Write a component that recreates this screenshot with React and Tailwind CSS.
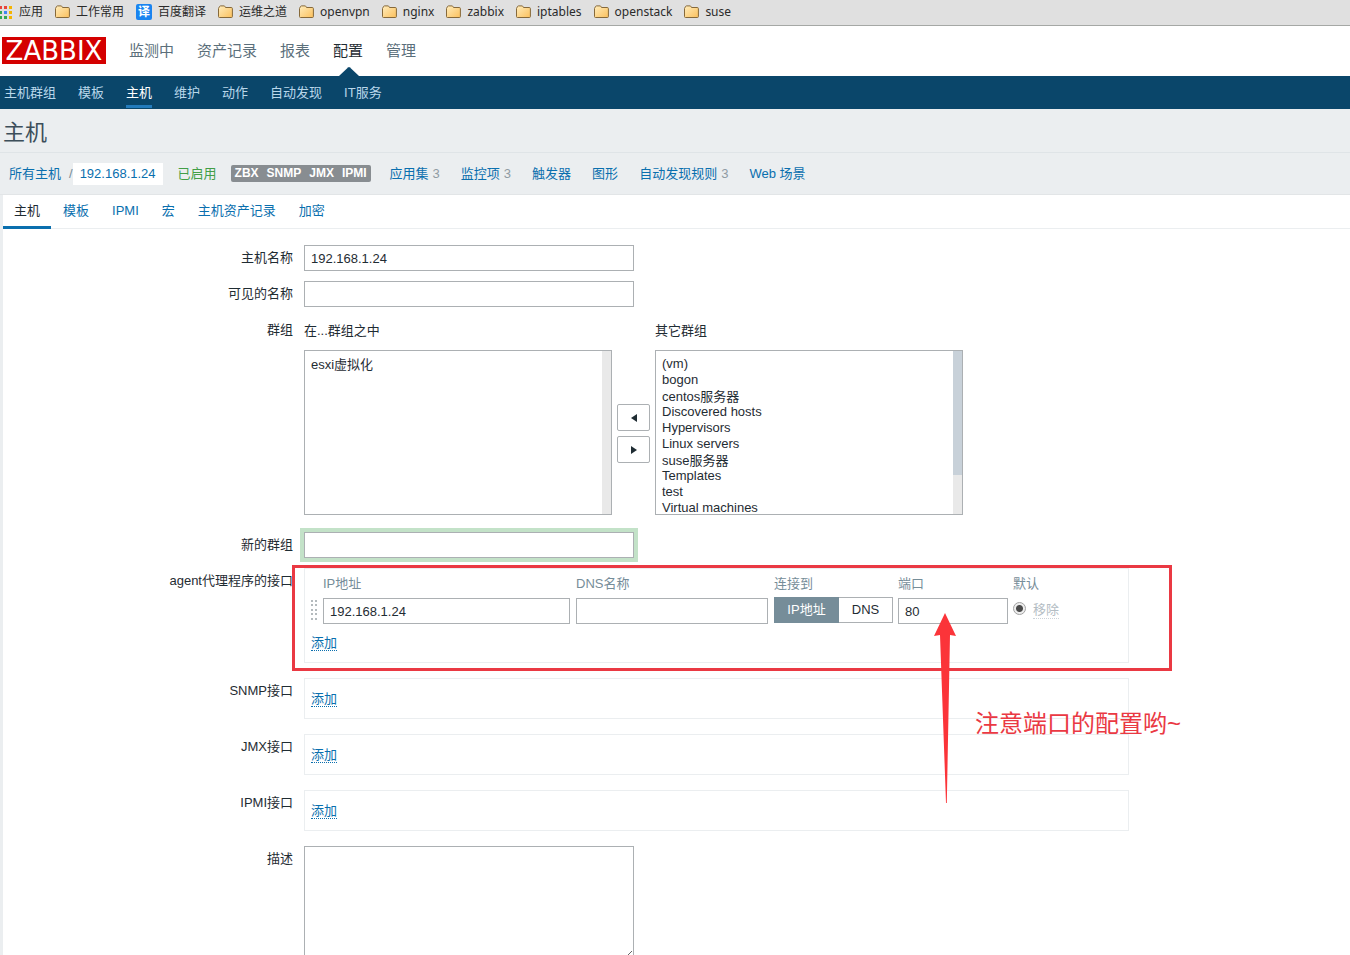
import React from "react";

const bookmarks = [
  { label: "工作常用", icon: "folder" },
  { label: "百度翻译", icon: "translate" },
  { label: "运维之道", icon: "folder" },
  { label: "openvpn", icon: "folder" },
  { label: "nginx", icon: "folder" },
  { label: "zabbix", icon: "folder" },
  { label: "iptables", icon: "folder" },
  { label: "openstack", icon: "folder" },
  { label: "suse", icon: "folder" },
];

const mainMenu = ["监测中", "资产记录", "报表", "配置", "管理"];
const subMenu = ["主机群组", "模板", "主机", "维护", "动作", "自动发现", "IT服务"];
const tabs = ["主机", "模板", "IPMI", "宏", "主机资产记录", "加密"];
const hostLinks = [
  { label: "应用集", count: 3 },
  { label: "监控项", count: 3 },
  { label: "触发器" },
  { label: "图形" },
  { label: "自动发现规则", count: 3 },
  { label: "Web 场景" },
];
const otherGroups = [
  "(vm)",
  "bogon",
  "centos服务器",
  "Discovered hosts",
  "Hypervisors",
  "Linux servers",
  "suse服务器",
  "Templates",
  "test",
  "Virtual machines",
  "VMware",
  "Web servers",
  "Zabbix servers",
];

function AppsIcon() {
  const rows = [
    ["#e8453c", "#e8453c", "#f4b400"],
    ["#34a853", "#4285f4", "#f4b400"],
    ["#34a853", "#34a853", "#f4b400"],
  ];
  return (
    <svg width="13" height="13" viewBox="0 0 13 13" aria-hidden="true">
      {rows.map((row, y) =>
        row.map((fill, x) => (
          <rect key={`${x}-${y}`} x={x * 5 - 1} y={y * 5} width="3" height="3" fill={fill} />
        ))
      )}
    </svg>
  );
}

function FolderIcon() {
  return (
    <svg width="15" height="14" viewBox="0 0 15 14" aria-hidden="true">
      <defs>
        <linearGradient id="folder" x1="0" y1="0" x2="1" y2="1">
          <stop offset="0" stopColor="#ffedbd" />
          <stop offset="1" stopColor="#fbc05c" />
        </linearGradient>
      </defs>
      <path
        d="M1.5 12.5 Q.5 12.5 .5 11.5 V3.5 L1.5 1.5 Q1.8 .9 2.5 .9 H6 Q6.7 .9 7 1.6 L7.5 2.5 H13.2 Q14.4 2.5 14.4 3.6 V11.5 Q14.4 12.5 13.4 12.5 Z"
        fill="url(#folder)"
        stroke="#86693a"
      />
    </svg>
  );
}

function BookmarkIcon({ icon }) {
  if (icon === "translate") {
    return (
      <span className="flex size-4 items-center justify-center rounded-[2px] bg-[#1a84f0] text-[12px] leading-4 font-bold text-white">
        译
      </span>
    );
  }
  return <FolderIcon />;
}

function FormRow({ label, htmlFor, children }) {
  return (
    <div className="flex items-start gap-[11px]">
      <label htmlFor={htmlFor} className="w-[290px] shrink-0 text-right leading-[26px]">
        {label}
      </label>
      <div className="min-w-0 flex-1">{children}</div>
    </div>
  );
}

const field = "block h-[26px] border border-[#acb0b3] bg-white px-[6px] text-[13px] text-[#1f2c33] outline-none";
const option = "flex h-4 items-center px-[6px] py-0 leading-4";
const moveButton =
  "flex h-[27px] w-[33px] items-center justify-center rounded-[2px] border border-[#acb0b3] bg-white";

function ListBox({ id, items, scrollable }) {
  return (
    <div className="relative w-[308px]">
      <select
        id={id}
        multiple
        className="block h-[165px] w-full overflow-y-scroll border border-[#acb0b3] bg-white py-[4px] text-[13px] outline-none [scrollbar-width:none]"
      >
        {items.map((item) => (
          <option key={item} className={option}>
            {item}
          </option>
        ))}
      </select>
      <div className="pointer-events-none absolute inset-y-px right-px w-[9px] bg-[#e9e9e9]">
        {scrollable && <div className="h-[124px] bg-[#c8d1d9]" />}
      </div>
    </div>
  );
}

function AddLink() {
  return (
    <a href="#add" className="inline-block border-b border-dotted border-[#0a6fae] align-top leading-[15px] text-[#0a6fae]">
      添加
    </a>
  );
}

function EmptyInterface({ label }) {
  return (
    <FormRow label={label}>
      <div className="mb-[5px] h-[41px] max-w-[825px] border border-[#ebeef0] px-[6px] pt-[12px]">
        <AddLink />
      </div>
    </FormRow>
  );
}

function DragHandle() {
  return (
    <svg width="8" height="22" viewBox="0 0 8 22" aria-hidden="true">
      {[1, 5, 10, 14, 19].map((y) => (
        <g key={y} fill="#b4babd">
          <rect x="1" y={y} width="2" height="2" />
          <rect x="5" y={y} width="2" height="2" />
        </g>
      ))}
    </svg>
  );
}

function AgentInterfaces() {
  return (
    <div className="mb-[5px] max-w-[825px] border border-[#ebeef0] pt-[4px] pb-[11px] pl-[5px]">
      <table className="w-full table-fixed">
        <colgroup>
          <col className="w-[13px]" />
          <col className="w-[253px]" />
          <col className="w-[198px]" />
          <col className="w-[124px]" />
          <col className="w-[115px]" />
          <col />
        </colgroup>
        <thead>
          <tr className="text-left leading-[22px] text-[#768d99]">
            <td className="p-0" />
            <th className="p-0 font-normal">IP地址</th>
            <th className="p-0 font-normal">DNS名称</th>
            <th className="p-0 font-normal">连接到</th>
            <th className="p-0 font-normal">端口</th>
            <th className="p-0 font-normal">默认</th>
          </tr>
        </thead>
        <tbody>
          <tr className="align-top">
            <td className="p-0 pt-1">
              <DragHandle />
            </td>
            <td className="p-0 pt-[3px]">
              <input aria-label="IP地址" defaultValue="192.168.1.24" className={`${field} w-[247px]`} />
            </td>
            <td className="p-0 pt-[3px]">
              <input aria-label="DNS名称" className={`${field} w-[192px]`} />
            </td>
            <td className="p-0 pt-[2px]">
              <div className="flex h-[26px] w-[119px]">
                <button type="button" className="w-[65px] bg-[#768d99] text-white">
                  IP地址
                </button>
                <button type="button" className="flex-1 border border-l-0 border-[#acb0b3] bg-white">
                  DNS
                </button>
              </div>
            </td>
            <td className="p-0 pt-[3px]">
              <input aria-label="端口" defaultValue="80" className={`${field} w-[110px]`} />
            </td>
            <td className="p-0 pt-[7px]">
              <div className="flex items-start gap-[7px]">
                <input
                  type="radio"
                  aria-label="默认"
                  defaultChecked
                  className="size-[13px] appearance-none rounded-full border border-[#a2a2a2] bg-[radial-gradient(circle,#4a4a4a_0_3px,#ededed_4px)]"
                />
                <button type="button" className="border-b border-dotted border-[#ccd3d8] leading-4 text-[#b4bdc4]">
                  移除
                </button>
              </div>
            </td>
          </tr>
        </tbody>
      </table>
      <div className="mt-[11px] h-4 pl-px">
        <AddLink />
      </div>
    </div>
  );
}

function Annotations() {
  return (
    <div className="pointer-events-none">
      <div className="absolute top-[-3px] left-[-12px] h-[106px] w-[880px] border-3 border-[#ea3943]" />
      <svg className="absolute top-[45px] left-[630px]" width="22" height="190" viewBox="0 0 22 190" aria-hidden="true">
        <path d="M11 0 L22 23 L16 22 L12.8 190 H12 L6 22 L0 23 Z" fill="#fb3439" />
      </svg>
      <p className="absolute top-[140px] left-[671px] text-[24px] leading-8 whitespace-nowrap text-[#ea3943]">
        注意端口的配置哟~
      </p>
    </div>
  );
}

export default function App() {
  return (
    <div className="min-h-screen overflow-x-hidden bg-[#ebeef0] font-['Liberation_Sans','Noto_Sans_CJK_SC',sans-serif] text-[13px] leading-5 text-[#1f2c33]">
      <nav className="flex h-[26px] items-center gap-3 border-b border-[#a5a8a5] bg-[#e0e0e0] pb-px font-['Noto_Sans','Noto_Sans_CJK_SC',sans-serif] text-[12px] leading-4 text-[#2a2a2a]">
        <a href="#apps" className="flex items-center gap-[6px]">
          <AppsIcon />
          应用
        </a>
        {bookmarks.map((b) => (
          <a key={b.label} href="#bookmark" className="flex items-center gap-[6px]">
            <BookmarkIcon icon={b.icon} />
            {b.label}
          </a>
        ))}
      </nav>

      <header>
        <div className="flex h-[50px] bg-white pl-[2px]">
          <a
            href="#home"
            className="mt-[11px] block h-[27px] w-[104px] bg-[#d40000] text-center font-['DejaVu_Sans',sans-serif] text-[26px] leading-[28px] text-white"
          >
            ZABBIX
          </a>
          <ul className="ml-[23px] flex h-full gap-[23px] text-[15px] text-[#5b6f7b]">
            {mainMenu.map((item) => (
              <li key={item} className="relative flex items-center">
                <a href="#menu" className={item === "配置" ? "text-[#1f2c33]" : ""}>
                  {item}
                </a>
                {item === "配置" && (
                  <svg className="absolute bottom-0 left-[6px]" width="20" height="9" viewBox="0 0 20 9" aria-hidden="true">
                    <path d="M0 9 L9 .5 Q10 -.3 11 .5 L20 9 Z" fill="#0a466a" />
                  </svg>
                )}
              </li>
            ))}
          </ul>
        </div>
        <ul className="flex h-[33px] gap-[22px] bg-[#0a466a] pl-[4px] text-[#b9d7ea]">
          {subMenu.map((item) => (
            <li key={item}>
              <a
                href="#section"
                className={
                  item === "主机"
                    ? "block h-8 border-b-3 border-[#237bbc] leading-[34px] text-white"
                    : "block h-8 leading-[34px]"
                }
              >
                {item}
              </a>
            </li>
          ))}
        </ul>
      </header>

      <h1 className="h-11 border-b border-[#dfe4e7] pl-[3px] text-[22px] leading-[48px] text-[#3c4e5a]">主机</h1>

      <div className="flex h-[42px] items-center border-b border-[#e2e5e7] pl-[9px] text-[#0a6fae]">
        <a href="#hosts">所有主机</a>
        <span className="ml-[8px] text-[#768d99]">/</span>
        <a href="#host" className="bg-white px-[7px] leading-[22px]">
          192.168.1.24
        </a>
        <span className="ml-[15px] text-[#429e47]">已启用</span>
        <span className="ml-[14px] flex overflow-hidden rounded-[2px] bg-[#888d91] text-[12px] leading-[17px] font-bold text-white">
          {["ZBX", "SNMP", "JMX", "IPMI"].map((s) => (
            <span key={s} className="px-1">
              {s}
            </span>
          ))}
        </span>
        <div className="ml-[19px] flex gap-[21px]">
          {hostLinks.map((l) => (
            <span key={l.label} className="flex gap-1">
              <a href="#link">{l.label}</a>
              {l.count && <span className="text-[#8f9ba3]">{l.count}</span>}
            </span>
          ))}
        </div>
      </div>

      <main className="ml-[3px] bg-white">
        <div role="tablist" className="flex h-[34px] gap-px border-b border-[#ebeef0]">
          {tabs.map((t, i) => (
            <button
              key={t}
              type="button"
              role="tab"
              aria-selected={i === 0}
              className={
                i === 0
                  ? "h-[34px] border-b-3 border-[#0a6fae] px-[11px] pt-px leading-[30px]"
                  : "h-[34px] border-b-3 border-transparent px-[11px] pt-px leading-[30px] text-[#0a6fae]"
              }
            >
              {t}
            </button>
          ))}
        </div>

        <form className="flex flex-col gap-[10px] pt-4 pb-4">
          <FormRow label="主机名称" htmlFor="host">
            <input id="host" defaultValue="192.168.1.24" className={`${field} w-[330px]`} />
          </FormRow>
          <FormRow label="可见的名称" htmlFor="visible">
            <input id="visible" className={`${field} w-[330px]`} />
          </FormRow>
          <FormRow label="群组" htmlFor="in-groups">
            <div className="flex pb-[7px]">
              <div>
                <label htmlFor="in-groups" className="mb-[5px] block leading-7">
                  在...群组之中
                </label>
                <ListBox id="in-groups" items={["esxi虚拟化"]} />
              </div>
              <div className="mx-[5px] flex flex-col gap-[5px] pt-[87px]">
                <button type="button" aria-label="移入" className={moveButton}>
                  <svg width="6" height="8" viewBox="0 0 6 8" aria-hidden="true">
                    <path d="M6 0 V8 L0 4 Z" fill="#1f2c33" />
                  </svg>
                </button>
                <button type="button" aria-label="移出" className={moveButton}>
                  <svg width="6" height="8" viewBox="0 0 6 8" aria-hidden="true">
                    <path d="M0 0 V8 L6 4 Z" fill="#1f2c33" />
                  </svg>
                </button>
              </div>
              <div>
                <label htmlFor="other-groups" className="mb-[5px] block leading-7">
                  其它群组
                </label>
                <ListBox id="other-groups" items={otherGroups} scrollable />
              </div>
            </div>
          </FormRow>
          <FormRow label="新的群组" htmlFor="new-group">
            <input id="new-group" className={`${field} w-[330px] ring-4 ring-[#c3e2c8]`} />
          </FormRow>
          <FormRow label="agent代理程序的接口">
            <div className="relative">
              <AgentInterfaces />
              <Annotations />
            </div>
          </FormRow>
          <EmptyInterface label="SNMP接口" />
          <EmptyInterface label="JMX接口" />
          <EmptyInterface label="IPMI接口" />
          <FormRow label="描述" htmlFor="description">
            <textarea
              id="description"
              className="block h-[114px] w-[330px] resize border border-[#acb0b3] bg-white p-[6px] outline-none"
            />
          </FormRow>
        </form>
      </main>
    </div>
  );
}
